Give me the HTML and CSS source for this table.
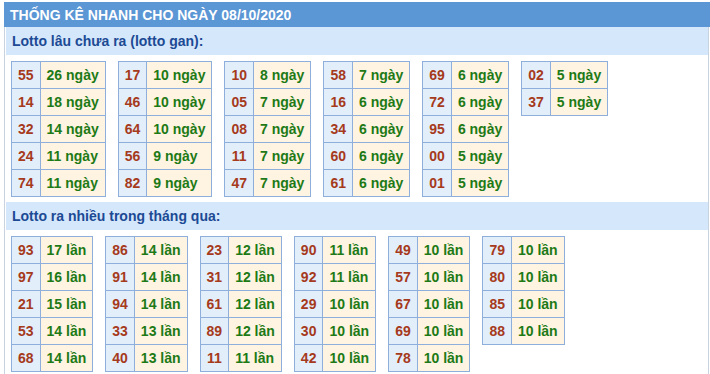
FILE: index.html
```html
<!DOCTYPE html>
<html lang="vi">
<head>
<meta charset="utf-8">
<title>Thống kê nhanh</title>
<link rel="stylesheet" href="styles.css">
</head>
<body>
<div class="box">
  <div class="title">THỐNG KÊ NHANH CHO NGÀY 08/10/2020</div>
  <div class="panel">
    <div class="sub">Lotto lâu chưa ra (lotto gan):</div>
    <div class="tables">
      <table class="t"><tr><td class="n">55</td><td class="v">26 ngày</td></tr><tr><td class="n">14</td><td class="v">18 ngày</td></tr><tr><td class="n">32</td><td class="v">14 ngày</td></tr><tr><td class="n">24</td><td class="v">11 ngày</td></tr><tr><td class="n">74</td><td class="v">11 ngày</td></tr></table>
      <table class="t"><tr><td class="n">17</td><td class="v">10 ngày</td></tr><tr><td class="n">46</td><td class="v">10 ngày</td></tr><tr><td class="n">64</td><td class="v">10 ngày</td></tr><tr><td class="n">56</td><td class="v">9 ngày</td></tr><tr><td class="n">82</td><td class="v">9 ngày</td></tr></table>
      <table class="t"><tr><td class="n">10</td><td class="v">8 ngày</td></tr><tr><td class="n">05</td><td class="v">7 ngày</td></tr><tr><td class="n">08</td><td class="v">7 ngày</td></tr><tr><td class="n">11</td><td class="v">7 ngày</td></tr><tr><td class="n">47</td><td class="v">7 ngày</td></tr></table>
      <table class="t"><tr><td class="n">58</td><td class="v">7 ngày</td></tr><tr><td class="n">16</td><td class="v">6 ngày</td></tr><tr><td class="n">34</td><td class="v">6 ngày</td></tr><tr><td class="n">60</td><td class="v">6 ngày</td></tr><tr><td class="n">61</td><td class="v">6 ngày</td></tr></table>
      <table class="t"><tr><td class="n">69</td><td class="v">6 ngày</td></tr><tr><td class="n">72</td><td class="v">6 ngày</td></tr><tr><td class="n">95</td><td class="v">6 ngày</td></tr><tr><td class="n">00</td><td class="v">5 ngày</td></tr><tr><td class="n">01</td><td class="v">5 ngày</td></tr></table>
      <table class="t"><tr><td class="n">02</td><td class="v">5 ngày</td></tr><tr><td class="n">37</td><td class="v">5 ngày</td></tr></table>
    </div>
    <div class="sub">Lotto ra nhiều trong tháng qua:</div>
    <div class="tables">
      <table class="t"><tr><td class="n">93</td><td class="v">17 lần</td></tr><tr><td class="n">97</td><td class="v">16 lần</td></tr><tr><td class="n">21</td><td class="v">15 lần</td></tr><tr><td class="n">53</td><td class="v">14 lần</td></tr><tr><td class="n">68</td><td class="v">14 lần</td></tr></table>
      <table class="t"><tr><td class="n">86</td><td class="v">14 lần</td></tr><tr><td class="n">91</td><td class="v">14 lần</td></tr><tr><td class="n">94</td><td class="v">14 lần</td></tr><tr><td class="n">33</td><td class="v">13 lần</td></tr><tr><td class="n">40</td><td class="v">13 lần</td></tr></table>
      <table class="t"><tr><td class="n">23</td><td class="v">12 lần</td></tr><tr><td class="n">31</td><td class="v">12 lần</td></tr><tr><td class="n">61</td><td class="v">12 lần</td></tr><tr><td class="n">89</td><td class="v">12 lần</td></tr><tr><td class="n">11</td><td class="v">11 lần</td></tr></table>
      <table class="t"><tr><td class="n">90</td><td class="v">11 lần</td></tr><tr><td class="n">92</td><td class="v">11 lần</td></tr><tr><td class="n">29</td><td class="v">10 lần</td></tr><tr><td class="n">30</td><td class="v">10 lần</td></tr><tr><td class="n">42</td><td class="v">10 lần</td></tr></table>
      <table class="t"><tr><td class="n">49</td><td class="v">10 lần</td></tr><tr><td class="n">57</td><td class="v">10 lần</td></tr><tr><td class="n">67</td><td class="v">10 lần</td></tr><tr><td class="n">69</td><td class="v">10 lần</td></tr><tr><td class="n">78</td><td class="v">10 lần</td></tr></table>
      <table class="t"><tr><td class="n">79</td><td class="v">10 lần</td></tr><tr><td class="n">80</td><td class="v">10 lần</td></tr><tr><td class="n">85</td><td class="v">10 lần</td></tr><tr><td class="n">88</td><td class="v">10 lần</td></tr></table>
    </div>
  </div>
</div>
</body>
</html>
```
FILE: styles.css
```css
html, body {
  margin: 0;
  padding: 0;
  background: #ffffff;
}
body {
  font-family: "Liberation Sans", Arial, sans-serif;
}
.box {
  margin: 2px 0 0 4px;
}
.title {
  height: 25px;
  line-height: 26px;
  background: #5b96d5;
  color: #ffffff;
  font-weight: bold;
  font-size: 14px;
  padding-left: 6px;
  white-space: nowrap;
}
.panel {
  width: 702px;
  border-left: 1px solid #c8d3df;
  border-right: 1px solid #c8d3df;
  padding-left: 1px;
  padding-bottom: 6px;
}
.sub {
  height: 28px;
  line-height: 29px;
  background: #d5e7fb;
  color: #1c4a94;
  font-weight: bold;
  font-size: 14px;
  padding-left: 6px;
}
.tables {
  display: flex;
  align-items: flex-start;
  gap: 12px;
  padding: 6px 0 5px 5px;
}
.t {
  border-collapse: collapse;
  font-size: 14px;
  font-weight: bold;
}
.t td {
  border: 1px solid #8eafdc;
  height: 27px;
  padding: 0 6px;
  box-sizing: border-box;
  white-space: nowrap;
  line-height: 16px;
}
.t .n {
  background: #e3eefb;
  color: #a53a1c;
  text-align: center;
}
.t .v {
  background: #fff3e1;
  color: #1d7a16;
}
```
